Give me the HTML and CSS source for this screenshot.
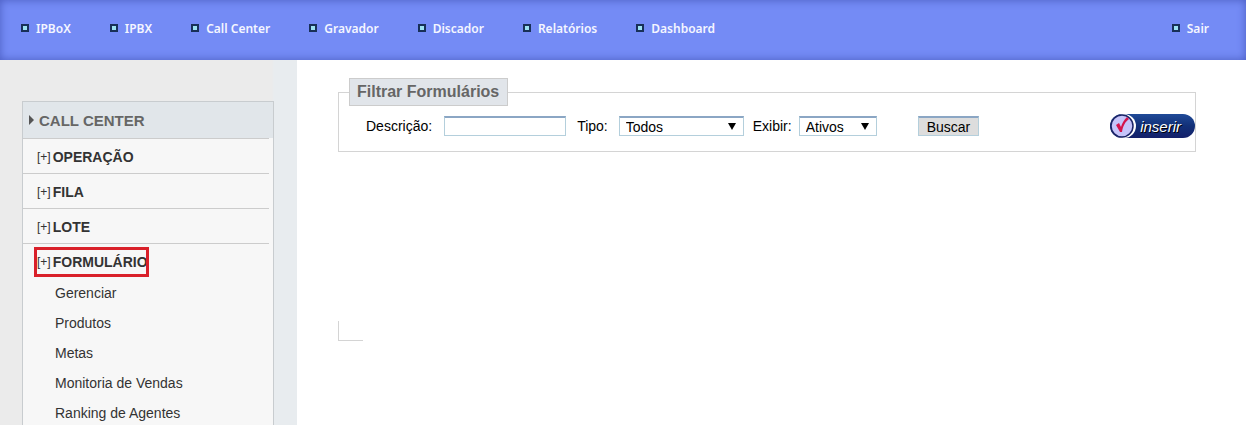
FILE: index.html
```html
<!DOCTYPE html>
<html lang="pt-BR">
<head>
    <meta charset="UTF-8">
    <meta name="viewport" content="width=device-width, initial-scale=1.0">
    <title>Formulários</title>
    <link rel="stylesheet" href="styles.css">
</head>
<body>
    <nav class="topbar">
        <a href="#">IPBoX</a>
        <a href="#">IPBX</a>
        <a href="#">Call Center</a>
        <a href="#">Gravador</a>
        <a href="#">Discador</a>
        <a href="#">Relatórios</a>
        <a href="#">Dashboard</a>
        <a href="#" class="logout">Sair</a>
    </nav>
    <div class="page">
        <aside class="sidebar">
            <div class="menu">
                <h2 class="menu-title">
                    <svg class="arrow" width="5" height="10" viewBox="0 0 5 10"><path d="M0 0L5 5L0 10Z" fill="#555"/></svg>
                    CALL CENTER
                </h2>
                <ul class="menu-list">
                    <li><a href="#" class="group"><span class="plus">[+]</span>OPERAÇÃO</a></li>
                    <li><a href="#" class="group"><span class="plus">[+]</span>FILA</a></li>
                    <li><a href="#" class="group"><span class="plus">[+]</span>LOTE</a></li>
                    <li>
                        <a href="#" class="group selected"><span class="plus">[+]</span>FORMULÁRIO</a>
                        <ul class="submenu">
                            <li><a href="#">Gerenciar</a></li>
                            <li><a href="#">Produtos</a></li>
                            <li><a href="#">Metas</a></li>
                            <li><a href="#">Monitoria de Vendas</a></li>
                            <li><a href="#">Ranking de Agentes</a></li>
                        </ul>
                    </li>
                </ul>
            </div>
        </aside>
        <main class="content">
            <form>
                <fieldset class="filter">
                    <legend>Filtrar Formulários</legend>
                    <div class="fields">
                        <label for="descricao">Descrição:</label>
                        <input type="text" id="descricao" class="descricao">
                        <label for="tipo">Tipo:</label>
                        <span class="select tipo">
                            <select id="tipo"><option>Todos</option></select>
                        </span>
                        <label for="exibir">Exibir:</label>
                        <span class="select exibir">
                            <select id="exibir"><option>Ativos</option><option>Inativos</option></select>
                        </span>
                        <button type="submit" class="search">Buscar</button>
                        <button type="button" class="insert">
                            <svg width="26" height="26" viewBox="0 0 26 26">
                                <circle cx="14" cy="13" r="12" fill="#fff"/>
                                <circle cx="12" cy="13" r="11" fill="#c6c4fa" stroke="#1b2466" stroke-width="1.5"/>
                                <path d="M6 12L9 10L11 14C12 10 14 7 17 4L19 6C15 9 13 13 12 19L10 19Z" fill="#d4144c"/>
                            </svg>
                            <span>inserir</span>
                        </button>
                    </div>
                </fieldset>
            </form>
            <div class="corner"></div>
        </main>
    </div>
</body>
</html>
```

FILE: styles.css
```css
body {
    font-family: "Liberation Sans", Arial, sans-serif;
    font-size: 14px;
    color: #222;
    background-color: #fff;
    margin: 0;
    min-height: 100vh;
    display: flex;
    flex-direction: column;
}

a {
    color: inherit;
    text-decoration: none;
}

ul {
    list-style: none;
    margin: 0;
    padding: 0;
}

.topbar {
    display: flex;
    align-items: center;
    gap: 39px;
    height: 60px;
    box-sizing: border-box;
    padding: 0 37px 4px 21px;
    background-color: #748bf5;
    box-shadow: inset 0 0 8px #4a5cc0;
    color: #f4f6ff;
    font: 600 12px "Noto Sans", Tahoma, sans-serif;
}

.topbar a {
    display: flex;
    align-items: center;
    gap: 7px;
}

.topbar a::before {
    content: "";
    width: 4px;
    height: 4px;
    border: 2px solid #183058;
    background-color: #9be0f0;
}

.topbar .logout {
    margin-left: auto;
}

.page {
    flex: 1;
    display: flex;
}

.sidebar {
    width: 297px;
    box-sizing: border-box;
    padding: 41px 23px 0 22px;
    background: linear-gradient(to right, #ebebeb 272px, #e8ecef 274px);
    display: flex;
}

.menu {
    flex: 1;
    border: 1px solid #c8cccf;
    border-bottom: none;
    background-color: #f7f7f7;
}

.menu-title {
    display: flex;
    align-items: center;
    gap: 5px;
    height: 36px;
    margin: 0;
    padding-left: 6px;
    background-color: #e1e6ea;
    color: #666;
    font-size: 15px;
    font-weight: bold;
}

.menu-list {
    margin-right: 4px;
}

.menu-list > li {
    border-top: 1px solid #ccc;
    padding: 4px 12px 2px;
}

.group {
    display: flex;
    align-items: center;
    gap: 2px;
    width: max-content;
    height: 28px;
    padding-left: 2px;
    color: #333;
    font-size: 14px;
    font-weight: bold;
}

.plus {
    font-size: 12px;
    font-weight: normal;
}

.selected {
    outline: 3px solid #d9202a;
    outline-offset: -2px;
}

.submenu {
    padding-top: 2px;
}

.submenu a {
    display: block;
    padding-left: 20px;
    color: #333;
    line-height: 30px;
}

.content {
    flex: 1;
    padding: 18px 50px 0 41px;
}

.filter {
    margin: 0;
    padding: 0 0 13px 9px;
    border: 1px solid #d4d4d4;
}

.filter legend {
    margin-left: 1px;
    padding: 0 8px 0 7px;
    border: 1px solid #ccc;
    background-color: #e1e5ea;
    color: #666;
    font-size: 16px;
    font-weight: bold;
    line-height: 26px;
}

.fields {
    display: flex;
    align-items: center;
    padding: 8px 0 0 18px;
    color: #000;
}

.fields input,
.fields select,
.search {
    box-sizing: border-box;
    height: 20px;
    border: 1px solid #b4cfdc;
    border-top: 2px solid #8ba6c4;
    border-radius: 0;
    background-color: #fff;
    color: #000;
    font: 14px "Liberation Sans", Arial, sans-serif;
}

.descricao {
    width: 122px;
    margin: 0 11px 0 12px;
}

.select {
    position: relative;
    margin: 0 9px 0 11px;
}

.select select {
    appearance: none;
    width: 100%;
    padding: 0 6px;
    display: block;
}

.select::after {
    content: "";
    position: absolute;
    top: 7px;
    right: 8px;
    border: 4px solid transparent;
    border-top: 7px solid #000;
    border-bottom: none;
    pointer-events: none;
}

.tipo {
    width: 125px;
}

.exibir {
    width: 78px;
    margin: 0 41px 0 7px;
}

.fields .search {
    padding: 0 8px;
    background-color: #ddd;
}

.insert {
    display: flex;
    align-items: center;
    gap: 4px;
    margin-left: auto;
    padding: 0 14px 0 0;
    height: 24px;
    border: none;
    border-radius: 12px;
    background: linear-gradient(#204a98, #123078 50%, #14206a);
    color: #fff;
    font: italic 15px "Liberation Sans", Arial, sans-serif;
    text-shadow: 1px 1px #000;
}

.corner {
    width: 24px;
    height: 19px;
    margin-top: 169px;
    border: solid #d4d4d4;
    border-width: 0 0 1px 1px;
}
```
